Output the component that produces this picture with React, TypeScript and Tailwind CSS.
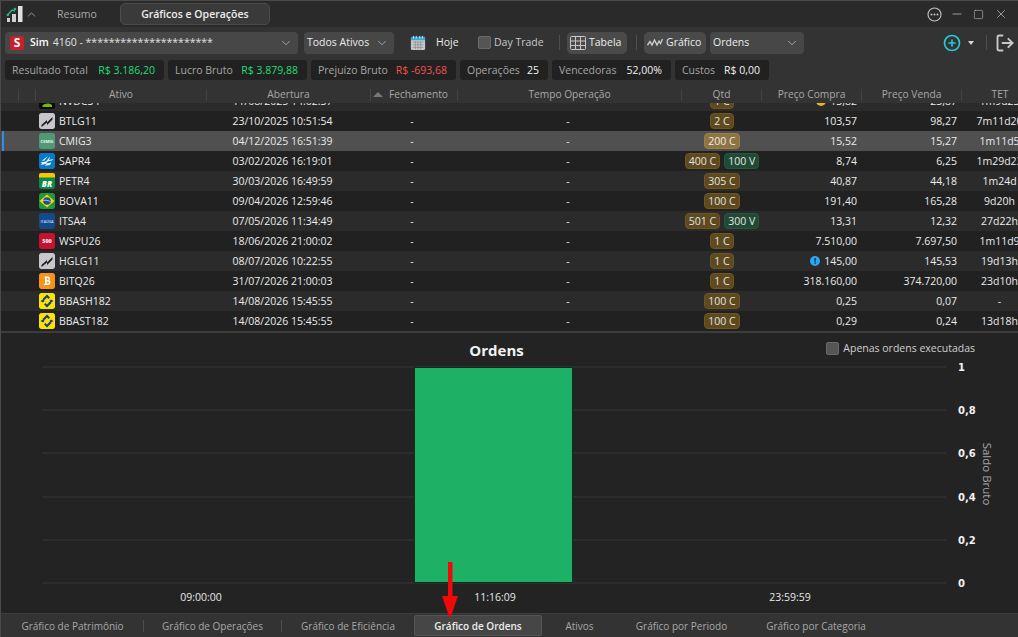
import { ChevronDown, ChevronUp, CirclePlus, LogOut, Minus, Square, X } from 'lucide-react';
import type { ReactNode } from 'react';

type Row = {
  ticker: string;
  logo: string;
  open: string;
  buy?: string;
  sell?: string;
  compra: string;
  venda: string;
  tet: string;
  warn?: 'blue' | 'yellow';
};

const rows: Row[] = [
  { ticker: 'NVDC34', logo: 'nvdc', open: '11/08/2025 14:02:37', buy: '1 C', compra: '13,82', venda: '23,87', tet: '1m9d23', warn: 'yellow' },
  { ticker: 'BTLG11', logo: 'hedge', open: '23/10/2025 10:51:54', buy: '2 C', compra: '103,57', venda: '98,27', tet: '7m11d20' },
  { ticker: 'CMIG3', logo: 'cmig', open: '04/12/2025 16:51:39', buy: '200 C', compra: '15,52', venda: '15,27', tet: '1m11d5' },
  { ticker: 'SAPR4', logo: 'sapr', open: '03/02/2026 16:19:01', buy: '400 C', sell: '100 V', compra: '8,74', venda: '6,25', tet: '1m29d23' },
  { ticker: 'PETR4', logo: 'petr', open: '30/03/2026 16:49:59', buy: '305 C', compra: '40,87', venda: '44,18', tet: '1m24d' },
  { ticker: 'BOVA11', logo: 'bova', open: '09/04/2026 12:59:46', buy: '100 C', compra: '191,40', venda: '165,28', tet: '9d20h' },
  { ticker: 'ITSA4', logo: 'itsa', open: '07/05/2026 11:34:49', buy: '501 C', sell: '300 V', compra: '13,31', venda: '12,32', tet: '27d22h' },
  { ticker: 'WSPU26', logo: 'wspu', open: '18/06/2026 21:00:02', buy: '1 C', compra: '7.510,00', venda: '7.697,50', tet: '1m11d9' },
  { ticker: 'HGLG11', logo: 'hedge', open: '08/07/2026 10:22:55', buy: '1 C', compra: '145,00', venda: '145,53', tet: '19d13h', warn: 'blue' },
  { ticker: 'BITQ26', logo: 'bitq', open: '31/07/2026 21:00:03', buy: '1 C', compra: '318.160,00', venda: '374.720,00', tet: '23d10h' },
  { ticker: 'BBASH182', logo: 'bb', open: '14/08/2026 15:45:55', buy: '100 C', compra: '0,25', venda: '0,07', tet: '-' },
  { ticker: 'BBAST182', logo: 'bb', open: '14/08/2026 15:45:55', buy: '100 C', compra: '0,29', venda: '0,24', tet: '13d18h' },
];

const bottomTabs = [
  { label: 'Gráfico de Patrimônio', width: 'w-[141px]' },
  { label: 'Gráfico de Operações', width: 'w-[137px]' },
  { label: 'Gráfico de Eficiência', width: 'w-[132px]' },
  { label: 'Gráfico de Ordens', width: 'w-[128px]' },
  { label: 'Ativos', width: 'w-[75px]' },
  { label: 'Gráfico por Periodo', width: 'w-[129px]' },
  { label: 'Gráfico por Categoria', width: 'w-[140px]' },
];

function Logo({ kind }: { kind: string }) {
  const base = 'h-4 w-4 shrink-0 rounded-[2px]';
  switch (kind) {
    case 'hedge':
      return (
        <svg viewBox="0 0 16 16" className={base}>
          <rect width="16" height="16" rx="2" fill="#c8c8cc" />
          <path d="M2.500 12 8 7v2.500L13.500 4v2.500L8 12V9.500L2.500 14z" fill="#1c1c1c" />
        </svg>
      );
    case 'cmig':
      return (
        <svg viewBox="0 0 16 16" className={base}>
          <rect width="16" height="16" rx="2" fill="#4f9a76" />
          <text x="8" y="9.500" textAnchor="middle" fontSize="4" fontWeight="700" fill="#eef7f2">CEMIG</text>
        </svg>
      );
    case 'sapr':
      return (
        <svg viewBox="0 0 16 16" className={base}>
          <rect width="16" height="16" rx="2" fill="#0a78c8" />
          <path d="M1.500 9.500 7 8.500 11 3.500 10 7l4.500-1-1.500 1.500-4 .8-2 2.200 5.500-1L11 12l-5 .8L7.500 10.800 1.500 12l1.500-1.500zM9 3 5.500 7.500 2.500 8z" fill="#e8f4fb" />
        </svg>
      );
    case 'petr':
      return (
        <svg viewBox="0 0 16 16" className={base}>
          <rect width="16" height="16" rx="2" fill="#0b8a43" />
          <rect width="16" height="4.500" fill="#f7c600" />
          <text x="8" y="13.500" textAnchor="middle" fontSize="8" fontWeight="800" fontStyle="italic" fill="#fff">BR</text>
        </svg>
      );
    case 'bova':
      return (
        <svg viewBox="0 0 16 16" className={base}>
          <rect width="16" height="16" rx="2" fill="#1c9a3e" />
          <path d="M8 1.500 15.500 8 8 14.500.5 8z" fill="#f5d60a" />
          <circle cx="8" cy="8" r="3.800" fill="#1d4f9e" />
          <path d="M4.300 7.500c2.500-.5 5-.2 7.300 1.200" fill="none" stroke="#e8e8e8" strokeWidth=".7" />
        </svg>
      );
    case 'itsa':
      return (
        <svg viewBox="0 0 16 16" className={base}>
          <rect width="16" height="16" rx="2" fill="#124a8c" />
          <text x="8" y="9.500" textAnchor="middle" fontSize="3.800" fontWeight="600" fill="#c6dcf2">ITAÚSA</text>
        </svg>
      );
    case 'wspu':
      return (
        <svg viewBox="0 0 16 16" className={base}>
          <rect width="16" height="16" rx="2" fill="#c4122f" />
          <text x="8" y="10" textAnchor="middle" fontSize="5.500" fontWeight="800" fill="#f5e4e7">500</text>
        </svg>
      );
    case 'bitq':
      return (
        <svg viewBox="0 0 16 16" className={base}>
          <rect width="16" height="16" rx="2" fill="#f7931a" />
          <path d="M6 3.500h3.200c2 0 2.500 3 .8 3.800 2.200.6 1.800 4.700-1 4.700H5v-1h1V4.500H5zM7.800 5v2h1.100c1 0 1-2 0-2zM7.800 8.500v2H9c1.300 0 1.300-2 0-2z" fill="#fff" />
        </svg>
      );
    case 'bb':
      return (
        <svg viewBox="0 0 16 16" className={base}>
          <rect width="16" height="16" rx="2" fill="#fce300" />
          <path d="M8 1.500 11 4.500 9.500 6 8 4.500 5 7.500 3.500 6zM4 6.500 5.500 8 4 9.500 1.500 8zM12 6.500 14.500 8 12 9.500 10.500 8zM8 14.500 5 11.500 6.500 10 8 11.500 11 8.500 12.500 10z" fill="#1a3c8f" />
        </svg>
      );
    default:
      return (
        <svg viewBox="0 0 16 16" className={base}>
          <rect width="16" height="16" rx="2" fill="#0a0a0a" />
          <path d="M3 13c3-3 7-3 10-1v2H4z" fill="#76b900" />
        </svg>
      );
  }
}

function Stat({ label, value, tone, className }: { label: string; value: string; tone: string; className: string }) {
  return (
    <div className={`flex h-5 items-center justify-between rounded-[3px] bg-[#212121] pl-[7px] pr-[9px] ${className}`}>
      <span className="text-[#a5a5a5]">{label}</span>
      <span className={tone}>{value}</span>
    </div>
  );
}

function Select({ label, className, children }: { label?: string; className: string; children?: ReactNode }) {
  return (
    <div className={`flex h-[22px] shrink-0 items-center justify-between rounded-[4px] bg-[#474747] pl-[3px] pr-[5px] text-[#ececec] ${className}`}>
      {children ?? <span className="whitespace-nowrap">{label}</span>}
      <ChevronDown size={14} strokeWidth={1.25} className="shrink-0 text-[#c4c4c4]" />
    </div>
  );
}

function Qty({ text, sell, selected }: { text: string; sell?: boolean; selected?: boolean }) {
  const tone = sell
    ? 'border-[#27573f] bg-[#1f4a36] text-[#e3e3e3]'
    : selected
      ? 'border-[#9a7f47] bg-[#8d7440] text-[#eeeeee]'
      : 'border-[#6f5620] bg-[#5e4a1e] text-[#e3e3e3]';
  return <span className={`flex h-4 items-center rounded-[4px] border px-[3px] leading-none ${tone}`}>{text}</span>;
}

function TableRow({ row, index }: { row: Row; index: number }) {
  const selected = row.ticker === 'CMIG3';
  const bg = selected ? 'bg-[#505050]' : index % 2 === 1 ? 'bg-[#212121]' : 'bg-[#2b2b2b]';
  return (
    <div className={`grid h-5 shrink-0 grid-cols-[35px_171px_164px_87px_224px_80px_100px_100px_80px] items-center text-[#ebebeb] ${bg}`}>
      <div className="flex h-full items-center">
        {selected && <div className="ml-px h-full w-[2px] bg-[#2f8fe8]" />}
      </div>
      <div className="flex items-center gap-[4px] pl-[3px]">
        <Logo kind={row.logo} />
        <span>{row.ticker}</span>
      </div>
      <div className="pr-[13px] text-center">{row.open}</div>
      <div className="pr-[5px] text-center">-</div>
      <div className="pr-[4px] text-center">-</div>
      <div className="flex items-center justify-center gap-1">
        {row.buy && <Qty text={row.buy} selected={selected} />}
        {row.sell && <Qty text={row.sell} sell />}
      </div>
      <div className="flex items-center justify-end gap-1 pr-[5px]">
        {row.warn === 'blue' && <span className="flex h-[10px] w-[10px] items-center justify-center rounded-full bg-[#2aa7f0] text-[8px] font-bold leading-none text-[#12283a]">!</span>}
        {row.warn === 'yellow' && <span className="h-[10px] w-[10px] rounded-full bg-[#e6b422]" />}
        <span>{row.compra}</span>
      </div>
      <div className="pr-[5px] text-right">{row.venda}</div>
      <div className="whitespace-nowrap pr-[5px] text-center">{row.tet}</div>
    </div>
  );
}

function OrdersPlot() {
  const ticks = [
    { y: 34, label: '1' },
    { y: 77, label: '0,8' },
    { y: 120, label: '0,6' },
    { y: 164, label: '0,4' },
    { y: 207, label: '0,2' },
    { y: 250, label: '0' },
  ];
  return (
    <svg viewBox="0 0 1018 280" className="h-[280px] w-[1018px]" fontFamily='"Open Sans", sans-serif' fontSize="10.5">
      {ticks.map((t) => (
        <g key={t.label}>
          <rect x="41" y={t.y - 1} width="904" height="2" fill="#2d2d2d" />
          <text x="957" y={t.y + 4} fill="#f2f2f2" fontWeight="700" fontFamily='"DejaVu Sans", sans-serif' fontSize="10">{t.label}</text>
        </g>
      ))}
      <rect x="413.500" y="34.500" width="158" height="215" fill="#1eb064" stroke="#0e2e1c" />
      <text x="200" y="268" textAnchor="middle" fill="#e8e8e8">09:00:00</text>
      <text x="494" y="268" textAnchor="middle" fill="#e8e8e8">11:16:09</text>
      <text x="789" y="268" textAnchor="middle" fill="#e8e8e8">23:59:59</text>
      <text x="0" y="0" textAnchor="middle" fill="#a8a8a8" fontSize="11.500" transform="translate(982 141) rotate(90)">Saldo Bruto</text>
    </svg>
  );
}

export default function App() {
  return (
    <div className="relative flex h-[637px] w-[1018px] flex-col overflow-hidden border-t border-l border-[#4a4a4a] bg-[#2a2a2a] text-[10.5px] leading-none" style={{ fontFamily: '"Open Sans", sans-serif' }}>
      {/* Title bar */}
      <div className="flex h-[26px] shrink-0 items-center">
        <svg viewBox="0 0 18 18" className="ml-[5px] h-[18px] w-[18px]">
          <rect x="1" y="13" width="3" height="4" fill="#d0d0d0" />
          <rect x="6" y="9" width="4" height="8" fill="#d0d0d0" />
          <rect x="12" y="1" width="4.500" height="16" fill="#e0e0e0" />
          <path d="M1.500 10 6 5l3 1" fill="none" stroke="#1fb88a" strokeWidth="1.500" />
          <circle cx="1.800" cy="10" r="1.300" fill="#1fb88a" />
          <circle cx="9" cy="4" r="1.300" fill="#1fb88a" />
        </svg>
        <ChevronUp size={13} strokeWidth={1.5} className="ml-[1px] text-[#a8a8a8]" />
        <span className="ml-[19px] text-[#a8a8a8]">Resumo</span>
        <div className="ml-[23px] flex h-[22px] w-[150px] items-center justify-center rounded-[5px] border border-[#4c4c4c] bg-[#3a3a3a] font-semibold text-[#ededed]">Gráficos e Operações</div>
        <div className="ml-auto flex items-center pr-[10px] text-[#c4c4c4]">
          <svg viewBox="0 0 15 15" className="h-[15px] w-[15px]">
            <circle cx="7.500" cy="7.500" r="6.500" fill="none" stroke="currentColor" strokeWidth="1.100" />
            <circle cx="4.500" cy="7.500" r="1" fill="currentColor" />
            <circle cx="7.500" cy="7.500" r="1" fill="currentColor" />
            <circle cx="10.500" cy="7.500" r="1" fill="currentColor" />
          </svg>
          <Minus size={14} strokeWidth={1.25} className="ml-[8px]" />
          <Square size={11} strokeWidth={1.25} className="ml-[9px]" />
          <X size={14} strokeWidth={1.25} className="ml-[10px]" />
        </div>
      </div>

      {/* Toolbar */}
      <div className="flex h-[31px] shrink-0 items-center bg-[#333333] pl-[4px]">
        <Select className="w-[293px] pl-[5px]">
          <div className="flex items-center whitespace-nowrap">
            <span className="flex h-[14px] w-[14px] items-center justify-center rounded-[2px] bg-[#c5202b] text-[12px] font-bold text-white">S</span>
            <span className="ml-[6px] font-semibold text-white">Sim</span>
            <span className="ml-[4px] text-[#e0e0e0]">4160 - **********************</span>
          </div>
        </Select>
        <Select label="Todos Ativos" className="ml-[6px] w-[90px]" />
        <svg viewBox="0 0 18 18" className="ml-[16px] h-4 w-4 shrink-0">
          <rect x="1" y="3" width="16" height="14" rx="1.500" fill="#c8c8c8" />
          <rect x="1" y="2" width="16" height="4" rx="1" fill="#30a8dc" />
          <path d="M4 1v3M7 1v3M11 1v3M14 1v3" stroke="#e6e6e6" />
          <path d="M3 8h12M3 11h12M3 14h12M6 7v9M9 7v9M12 7v9" stroke="#8c8c8c" strokeWidth=".8" />
        </svg>
        <span className="ml-[10px] w-[22px] shrink-0 whitespace-nowrap text-[#ececec]">Hoje</span>
        <span className="ml-[20px] h-[13px] w-[13px] shrink-0 rounded-[2px] border border-[#6a6a6a] bg-[#555555]" />
        <span className="ml-[3px] w-[50px] shrink-0 whitespace-nowrap text-[#c8c8c8]">Day Trade</span>
        <span className="ml-[15px] h-[15px] w-px shrink-0 bg-[#4e4e4e]" />
        <div className="ml-[7px] flex h-[22px] w-[60px] shrink-0 items-center gap-[3px] rounded-[5px] bg-[#4a4a4a] pl-[3px] text-[#ececec]">
          <svg viewBox="0 0 16 14" className="h-[14px] w-4" fill="none" stroke="#c8c8c8">
            <rect x=".5" y=".5" width="15" height="13" rx="1" />
            <path d="M.5 5h15M.5 9.500h15M5.500.5v13M10.500.5v13" />
          </svg>
          Tabela
        </div>
        <span className="ml-[9px] h-[15px] w-px shrink-0 bg-[#4e4e4e]" />
        <div className="ml-[7px] flex h-[22px] w-[62px] shrink-0 items-center gap-[3px] rounded-[5px] bg-[#4a4a4a] pl-[3px] text-[#ececec]">
          <svg viewBox="0 0 16 10" className="h-[10px] w-4" fill="none" stroke="#d0d0d0" strokeWidth="1.300">
            <path d="M.5 7 3 3.500 5 7l2.500-5L10 7l2-4 1.500 2.500L15.500 1" />
          </svg>
          Gráfico
        </div>
        <Select label="Ordens" className="ml-[4px] w-[94px]" />
        <CirclePlus size={18} strokeWidth={2.25} className="ml-[139px] shrink-0 text-[#28c8d8]" />
        <span className="ml-[7px] h-0 w-0 shrink-0 border-x-[3.5px] border-t-[4px] border-x-transparent border-t-[#d8d8d8]" />
        <span className="ml-[12px] h-[15px] w-px shrink-0 bg-[#4e4e4e]" />
        <LogOut size={20} strokeWidth={2.25} className="ml-[8px] shrink-0 text-[#c8c8c8]" />
      </div>

      {/* Stats */}
      <div className="flex h-[26px] shrink-0 items-start gap-[4px] bg-[#333333] pl-[4px] pt-[2px]">
        <Stat label="Resultado Total" value="R$ 3.186,20" tone="text-[#22dd77]" className="w-[159px]" />
        <Stat label="Lucro Bruto" value="R$ 3.879,88" tone="text-[#22dd77]" className="w-[139px]" />
        <Stat label="Prejuízo Bruto" value="R$ -693,68" tone="text-[#f0524c]" className="w-[145px]" />
        <Stat label="Operações" value="25" tone="text-[#f0f0f0]" className="w-[88px]" />
        <Stat label="Vencedoras" value="52,00%" tone="text-[#f0f0f0]" className="w-[119px]" />
        <Stat label="Custos" value="R$ 0,00" tone="text-[#f0f0f0]" className="w-[94px]" />
      </div>

      {/* Table */}
      <div className="grid h-[19px] shrink-0 grid-cols-[18px_17px_171px_164px_87px_224px_80px_100px_100px_56px] items-center bg-[#333333] pt-[2px] text-[10.2px] text-[#a8a8a8]">
        <div className="h-3 border-r border-[#444444]" />
        <div className="h-3 border-r border-[#444444]" />
        <div className="flex h-3 items-center justify-center border-r border-[#444444]">Ativo</div>
        <div className="flex h-3 items-center justify-center border-r border-[#444444]">Abertura</div>
        <div className="flex h-3 items-center gap-[6px] whitespace-nowrap border-r border-[#444444] pl-[2px]">
          <span className="h-0 w-0 border-x-[5px] border-b-[5px] border-x-transparent border-b-[#777777]" />
          Fechamento
        </div>
        <div className="flex h-3 items-center justify-center border-r border-[#444444]">Tempo Operação</div>
        <div className="flex h-3 items-center justify-center border-r border-[#444444]">Qtd</div>
        <div className="flex h-3 items-center justify-center border-r border-[#444444]">Preço Compra</div>
        <div className="flex h-3 items-center justify-center border-r border-[#444444]">Preço Venda</div>
        <div className="flex h-3 items-center justify-center pl-[20px]">TET</div>
      </div>
      <div className="flex h-[228px] shrink-0 flex-col overflow-hidden bg-[#2b2b2b]">
        <div className="-mt-[12px] flex flex-col">
          {rows.map((row, i) => (
            <TableRow key={row.ticker} row={row} index={i} />
          ))}
        </div>
      </div>

      {/* Chart */}
      <div className="relative h-[282px] shrink-0 border-t-2 border-[#3d3d3d] bg-[#232323]">
        <div className="absolute left-0 top-[10px] w-[991px] text-center text-[15px] font-bold text-[#f2f2f2]">Ordens</div>
        <div className="absolute right-[43px] top-[9px] flex items-center gap-[4px] text-[#d0d0d0]">
          <span className="h-[13px] w-[13px] rounded-[2px] border border-[#6a6a6a] bg-[#555555]" />
          Apenas ordens executadas
        </div>
        <OrdersPlot />
      </div>

      {/* Bottom tabs */}
      <div className="flex h-[24px] shrink-0 items-center border-t border-[#3d3d3d] bg-[#333333] pl-[1px] text-[10px] text-[#a8a8a8]">
        {bottomTabs.map((tab, i) => (
          <div key={tab.label} className="flex items-center">
            {tab.label === 'Gráfico de Ordens' ? (
              <div className={`flex h-[21px] items-center justify-center rounded-[2px] border border-[#555555] bg-[#464646] pt-px font-semibold text-[#ededed] ${tab.width}`}>{tab.label}</div>
            ) : (
              <div className={`flex h-[21px] items-center justify-center whitespace-nowrap pt-px ${tab.width}`}>{tab.label}</div>
            )}
            {i < 2 && <span className="h-[12px] w-px bg-[#4e4e4e]" />}
          </div>
        ))}
      </div>

      {/* Annotation arrow */}
      <svg viewBox="0 0 16 57" className="absolute left-[441px] top-[561px] h-[57px] w-4">
        <rect x="6" y="0" width="4.500" height="36" fill="#f20808" />
        <path d="M0 34h16L8 57z" fill="#f20808" />
      </svg>
    </div>
  );
}
